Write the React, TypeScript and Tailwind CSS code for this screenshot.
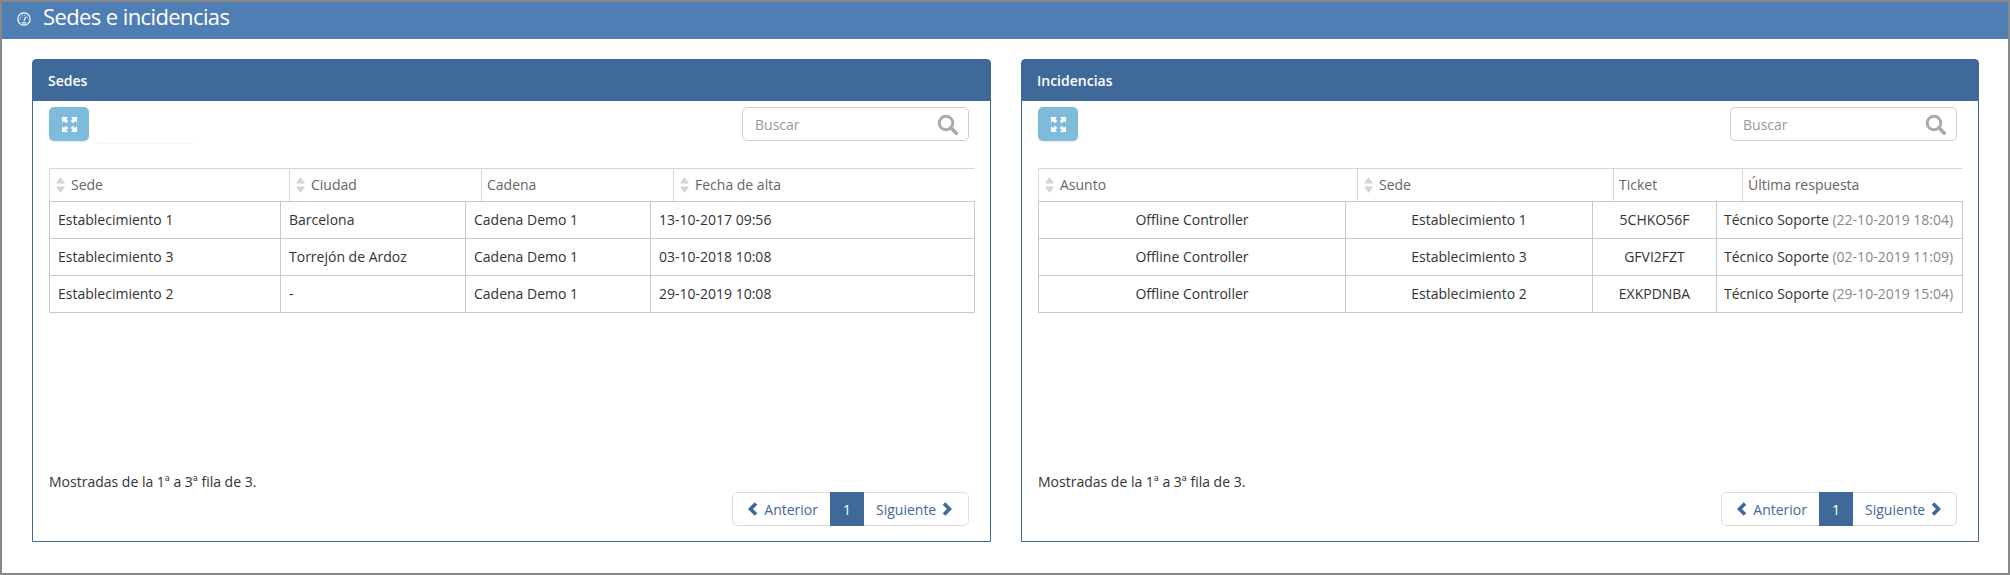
const FONT = "font-['Open_Sans',sans-serif]";

function SortArrows() {
  return (
    <svg width="11" height="16" viewBox="0 0 11 16" className="shrink-0">
      <path d="M5.5 0 L10 6.5 H1 Z M1 9.5 H10 L5.5 16 Z" fill="#d4d4d4" />
    </svg>
  );
}

function GaugeIcon() {
  return (
    <svg width="14" height="14" viewBox="0 0 14 14" fill="none" stroke="white" className="shrink-0">
      <circle cx="7" cy="7" r="6.2" strokeWidth="1.2" />
      <path d="M3 7.5a4 4 0 0 1 8 0" strokeWidth="1" strokeDasharray="1 1" />
      <path d="M7 9 L8.6 5" strokeWidth="1.2" />
      <path d="M4.8 10.8h4.4" strokeWidth="1.2" />
    </svg>
  );
}

function ExpandIcon() {
  return (
    <svg width="15" height="15" viewBox="0 0 15 15" fill="white">
      <path d="M0 0 H6 L4.1 1.9 L6.3 4.1 L4.1 6.3 L1.9 4.1 L0 6 Z" />
      <path d="M15 0 V6 L13.1 4.1 L10.9 6.3 L8.7 4.1 L10.9 1.9 L9 0 Z" />
      <path d="M0 15 V9 L1.9 10.9 L4.1 8.7 L6.3 10.9 L4.1 13.1 L6 15 Z" />
      <path d="M15 15 H9 L10.9 13.1 L8.7 10.9 L10.9 8.7 L13.1 10.9 L15 9 Z" />
    </svg>
  );
}

function SearchIcon() {
  return (
    <svg width="21" height="21" viewBox="0 0 21 21" fill="none" stroke="#aaaaaa" className="shrink-0">
      <circle cx="9" cy="9" r="6.8" strokeWidth="3" />
      <path d="M13.8 13.8 L19.3 19.3" strokeWidth="3.6" strokeLinecap="round" />
    </svg>
  );
}

function Chevron({ dir }: { dir: 'left' | 'right' }) {
  return (
    <svg width="10" height="14" viewBox="0 0 10 14" fill="none" stroke="#3f6999" strokeWidth="3.6" className="shrink-0">
      <path d={dir === 'left' ? 'M8 1.5 L2.5 7 L8 12.5' : 'M2 1.5 L7.5 7 L2 12.5'} />
    </svg>
  );
}

interface Head {
  label: string;
  width: string;
  sort?: boolean;
}

function Toolbar({ rule }: { rule?: boolean }) {
  return (
    <div className="flex items-start justify-between pt-[6px] pl-[16px] pr-[21px]">
      <div className="flex">
        <button className="flex h-[34px] w-[40px] items-center justify-center rounded-[5px] bg-[#7fbcdc] shadow-[0_1px_1px_rgba(0,0,0,0.08)]">
          <ExpandIcon />
        </button>
        {rule && <div className="mt-[36px] -mb-[3px] ml-[4px] h-px w-[101px] bg-[#f6f6f6]" />}
      </div>
      <div className="flex h-[34px] w-[227px] items-center justify-between rounded-[5px] border border-[#cfcfcf] pl-[12px] pr-[10px]">
        <span className="text-[14px] text-[#999]">Buscar</span>
        <SearchIcon />
      </div>
    </div>
  );
}

function Pagination() {
  return (
    <div className="flex h-[34px] items-stretch rounded-[5px] border border-[#ddd] text-[14px] text-[#3f6999]">
      <div className="flex w-[97px] items-center justify-end gap-[6px] pr-[12px]">
        <Chevron dir="left" />
        Anterior
      </div>
      <div className="-my-px flex w-[34px] items-center justify-center bg-[#3f6999] font-medium text-white">1</div>
      <div className="flex flex-1 items-center gap-[6px] pl-[12px]">
        Siguiente
        <Chevron dir="right" />
      </div>
    </div>
  );
}

function Panel({
  title,
  heads,
  colWidths,
  rows,
  center,
  rule,
  tableWidth,
  pagerWidth,
}: {
  title: string;
  heads: Head[];
  colWidths: string[];
  rows: React.ReactNode[][];
  center?: boolean;
  rule?: boolean;
  tableWidth: string;
  pagerWidth: string;
}) {
  return (
    <section className="flex h-[483px] flex-col rounded-t-[4px] border border-[#3f6999]">
      <header className="flex h-[41px] shrink-0 items-center bg-[#3f6999] pl-[15px] text-[14px] font-semibold text-white">
        {title}
      </header>
      <Toolbar rule={rule} />
      <div className="mt-[27px] pl-[16px]">
        <table className={`table-fixed border-collapse ${tableWidth}`}>
          <thead>
            <tr className="h-[32px] border-t border-l border-[#d8d8d8] text-left text-[14px] font-normal text-[#666]">
              {heads.map((h, i) => (
                <th key={h.label} className={`${h.width} ${i > 0 ? 'border-l border-[#d8d8d8]' : ''} p-0 font-normal`}>
                  <div className={`flex items-center ${h.sort ? 'gap-[5px] pl-[5px]' : 'pl-[5px]'}`}>
                    {h.sort && <SortArrows />}
                    {h.label}
                  </div>
                </th>
              ))}
            </tr>
          </thead>
        </table>
        <table className={`table-fixed border-collapse ${tableWidth}`}>
          <tbody>
            {rows.map((row, r) => (
              <tr key={r} className="h-[37px] text-[14px] text-[#333]">
                {row.map((cell, c) => (
                  <td
                    key={c}
                    className={`${colWidths[c]} border border-[#c9c9c9] p-0 whitespace-nowrap ${
                      center ? (c < 3 ? 'text-center' : 'pl-[7px]') : 'pl-[8px]'
                    }`}
                  >
                    {cell}
                  </td>
                ))}
              </tr>
            ))}
          </tbody>
        </table>
      </div>
      <div className="mt-auto pb-[15px] pl-[16px] pr-[21px]">
        <p className="text-[14px] leading-[20px] text-[#333]">Mostradas de la 1ª a 3ª fila de 3.</p>
        <div className="flex justify-end">
          <div className={pagerWidth}>
            <Pagination />
          </div>
        </div>
      </div>
    </section>
  );
}

function Reply({ date }: { date: string }) {
  return (
    <>
      Técnico Soporte <span className="text-[#888]">({date})</span>
    </>
  );
}

export default function App() {
  return (
    <div className={`h-[575px] w-[2010px] overflow-hidden border-2 border-[#888] bg-white ${FONT}`}>
      <div className="flex h-[37px] items-center gap-[12px] bg-[#4f7eb5] pb-[4px] pl-[15px] text-white">
        <GaugeIcon />
        <h1 className="pb-[5px] text-[22px] leading-none font-medium tracking-[-0.6px]">Sedes e incidencias</h1>
      </div>
      <main className="grid grid-cols-[959px_958px] gap-[30px] pt-[20px] pl-[30px]">
        <Panel
          title="Sedes"
          rule
          tableWidth="w-[925px]"
          pagerWidth="w-[237px]"
          heads={[
            { label: 'Sede', width: 'w-[240px]', sort: true },
            { label: 'Ciudad', width: 'w-[192px]', sort: true },
            { label: 'Cadena', width: 'w-[192px]' },
            { label: 'Fecha de alta', width: 'w-[301px]', sort: true },
          ]}
          colWidths={['w-[231px]', 'w-[185px]', 'w-[185px]', 'w-[324px]']}
          rows={[
            ['Establecimiento 1', 'Barcelona', 'Cadena Demo 1', '13-10-2017 09:56'],
            ['Establecimiento 3', 'Torrejón de Ardoz', 'Cadena Demo 1', '03-10-2018 10:08'],
            ['Establecimiento 2', '-', 'Cadena Demo 1', '29-10-2019 10:08'],
          ]}
        />
        <Panel
          title="Incidencias"
          center
          tableWidth="w-[924px]"
          pagerWidth="w-[236px]"
          heads={[
            { label: 'Asunto', width: 'w-[319px]', sort: true },
            { label: 'Sede', width: 'w-[256px]', sort: true },
            { label: 'Ticket', width: 'w-[129px]' },
            { label: 'Última respuesta', width: 'w-[220px]' },
          ]}
          colWidths={['w-[307px]', 'w-[247px]', 'w-[124px]', 'w-[246px]']}
          rows={[
            ['Offline Controller', 'Establecimiento 1', '5CHKO56F', <Reply date="22-10-2019 18:04" />],
            ['Offline Controller', 'Establecimiento 3', 'GFVI2FZT', <Reply date="02-10-2019 11:09" />],
            ['Offline Controller', 'Establecimiento 2', 'EXKPDNBA', <Reply date="29-10-2019 15:04" />],
          ]}
        />
      </main>
    </div>
  );
}
